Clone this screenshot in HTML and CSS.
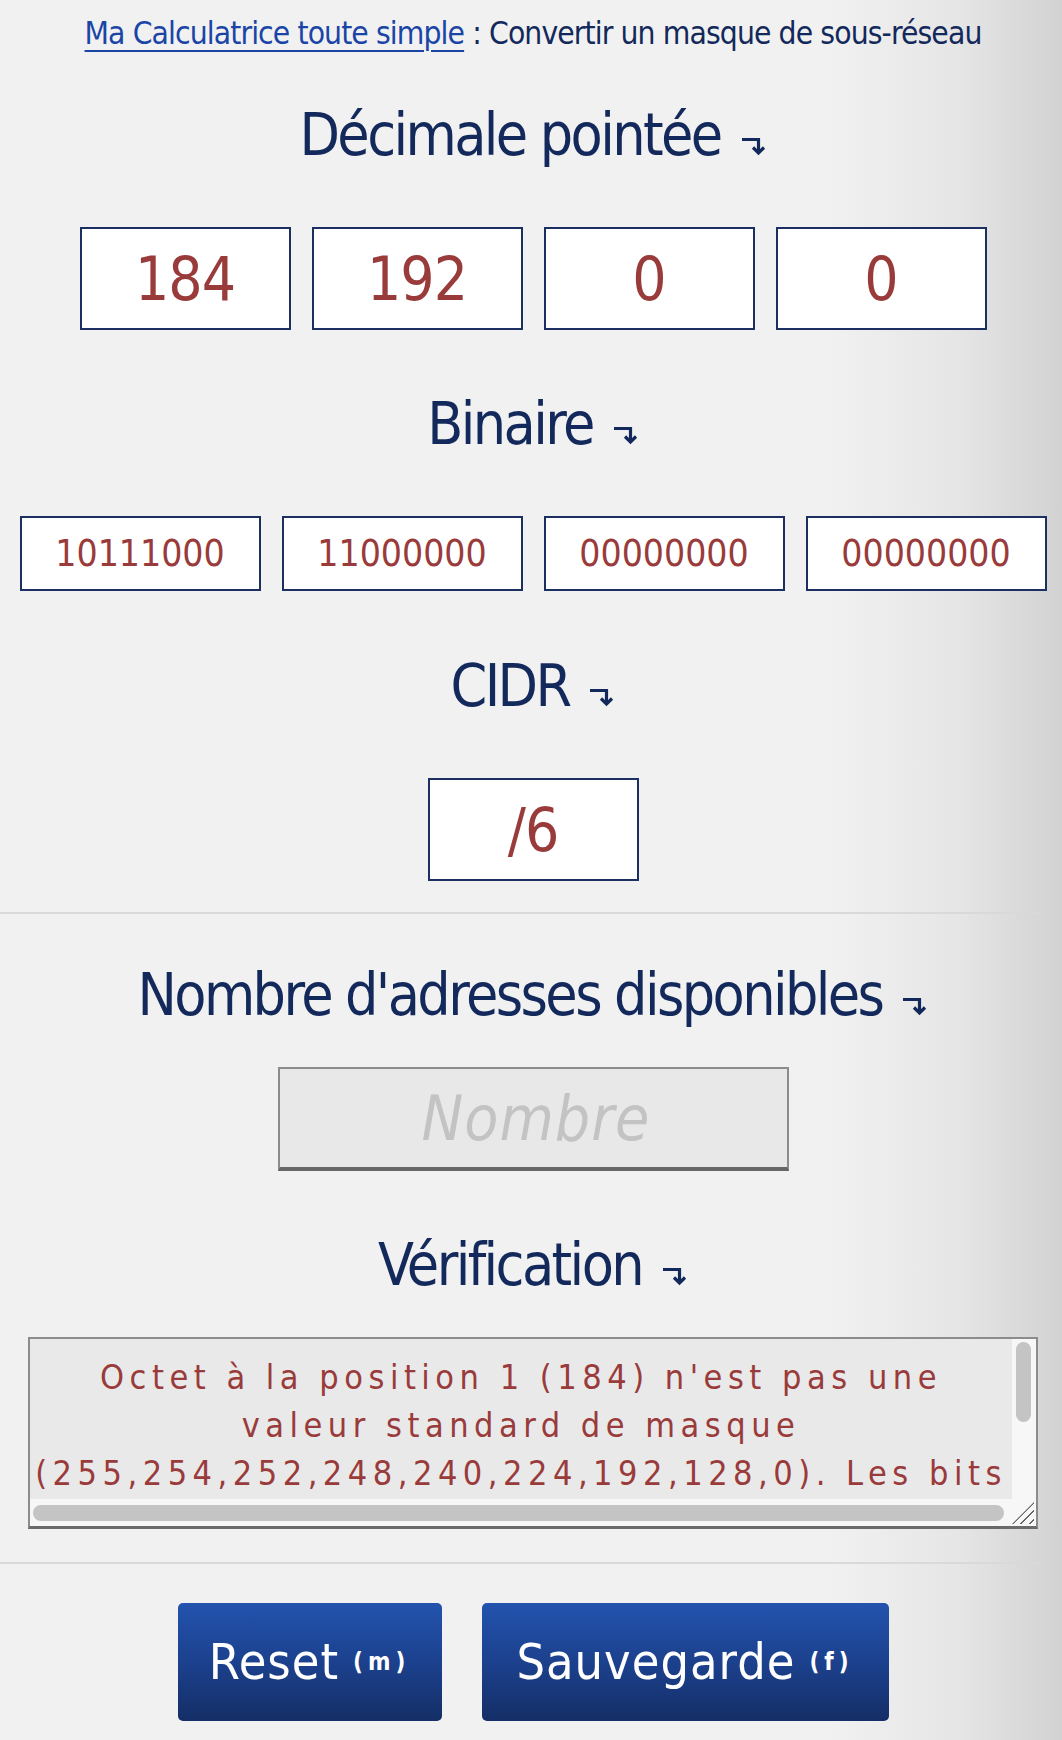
FILE: index.html
```html
<!DOCTYPE html>
<html lang="fr">
<head>
<meta charset="utf-8">
<title>Convertir un masque de sous-réseau</title>
<link rel="stylesheet" href="styles.css">
</head>
<body>
<main class="page">
  <p class="title"><a href="#" class="title-link">Ma Calculatrice toute simple</a> : Convertir un masque de sous-réseau</p>

  <h2 class="heading h-dec">Décimale pointée<svg class="arrow" viewBox="0 0 26 20" aria-hidden="true"><path d="M1 3.5H17.5V17"/><path d="M12 11.5L17.5 17L23 11.5"/></svg></h2>
  <div class="row row-dec">
    <div class="box box-dec">184</div>
    <div class="box box-dec">192</div>
    <div class="box box-dec">0</div>
    <div class="box box-dec">0</div>
  </div>

  <h2 class="heading h-bin">Binaire<svg class="arrow" viewBox="0 0 26 20" aria-hidden="true"><path d="M1 3.5H17.5V17"/><path d="M12 11.5L17.5 17L23 11.5"/></svg></h2>
  <div class="row row-bin">
    <div class="box box-bin">10111000</div>
    <div class="box box-bin">11000000</div>
    <div class="box box-bin">00000000</div>
    <div class="box box-bin">00000000</div>
  </div>

  <h2 class="heading h-cidr">CIDR<svg class="arrow" viewBox="0 0 26 20" aria-hidden="true"><path d="M1 3.5H17.5V17"/><path d="M12 11.5L17.5 17L23 11.5"/></svg></h2>
  <div class="row row-cidr">
    <div class="box box-dec">/6</div>
  </div>

  <hr class="sep sep-1">

  <h2 class="heading h-nb">Nombre d'adresses disponibles<svg class="arrow" viewBox="0 0 26 20" aria-hidden="true"><path d="M1 3.5H17.5V17"/><path d="M12 11.5L17.5 17L23 11.5"/></svg></h2>
  <div class="row row-nb">
    <div class="field"><span class="placeholder">Nombre</span></div>
  </div>

  <h2 class="heading h-verif">Vérification<svg class="arrow" viewBox="0 0 26 20" aria-hidden="true"><path d="M1 3.5H17.5V17"/><path d="M12 11.5L17.5 17L23 11.5"/></svg></h2>
  <div class="textarea">
    <div class="textarea-content">Octet à la position 1 (184) n'est pas une<br>valeur standard de masque<br>(255,254,252,248,240,224,192,128,0). Les bits</div>
    <div class="vscroll"><div class="vthumb"></div></div>
    <div class="hscroll"><div class="hthumb"></div></div>
    <div class="grip"></div>
  </div>

  <hr class="sep sep-2">

  <div class="buttons">
    <button class="btn btn-reset">Reset <span class="key">(m)</span></button>
    <button class="btn btn-save">Sauvegarde <span class="key">(f)</span></button>
  </div>
</main>
</body>
</html>
```

FILE: styles.css
```css
html, body {
  margin: 0;
  padding: 0;
}
body {
  width: 1062px;
  min-height: 1740px;
  background: linear-gradient(to right, #f1f1f1 0%, #f1f1f1 78%, #e6e6e6 90%, #d2d2d2 100%);
  font-family: "DejaVu Sans Condensed", "DejaVu Sans", sans-serif;
  font-stretch: condensed;
  color: #13295b;
}
.page {
  display: flex;
  flex-direction: column;
  align-items: center;
  padding-left: 4px;
}
.title {
  margin: 0;
  height: 66px;
  line-height: 66px;
  font-size: 31.5px;
  letter-spacing: -0.9px;
  color: #13295b;
  white-space: nowrap;
}
.title-link {
  color: #1a45a6;
  text-decoration: underline;
  text-decoration-thickness: 2px;
  text-underline-offset: 6px;
}
.heading {
  margin: 0;
  height: 70px;
  line-height: 70px;
  font-size: 58.5px;
  font-weight: normal;
  letter-spacing: -2.6px;
  color: #13295b;
  white-space: nowrap;
  display: flex;
  align-items: center;
}
.arrow {
  width: 26px;
  height: 20px;
  margin-left: 20px;
  margin-top: 22px;
  fill: none;
  stroke: #13295b;
  stroke-width: 3.2;
}
.h-dec { margin-top: 34px; }
.h-bin { margin-top: 59px; }
.h-cidr { margin-top: 60px; }
.h-nb { margin-top: 46px; }
.h-verif { margin-top: 59px; }

.row {
  display: flex;
  justify-content: center;
  gap: 21px;
}
.row-dec { margin-top: 57px; }
.row-bin { margin-top: 57px; }
.row-cidr { margin-top: 57px; }
.row-nb { margin-top: 37px; }

.box {
  box-sizing: border-box;
  background: #ffffff;
  border: 2px solid #1b3060;
  color: #9a3b3b;
  display: flex;
  align-items: center;
  justify-content: center;
}
.box-dec {
  width: 211px;
  height: 103px;
  font-size: 60px;
  letter-spacing: -1px;
}
.box-bin {
  width: 241px;
  height: 75px;
  font-size: 37px;
  letter-spacing: 0;
}

.sep {
  align-self: flex-start;
  width: 1040px;
  height: 2px;
  border: 0;
  margin: 0;
  margin-left: -4px;
  background: #d9d9d9;
}
.sep-1 { margin-top: 31px; }
.sep-2 { margin-top: 33px; }

.field {
  box-sizing: border-box;
  width: 511px;
  height: 104px;
  background: #e8e8e8;
  border: 2px solid #8c8c8c;
  border-bottom: 4px solid #666666;
  display: flex;
  align-items: center;
  justify-content: center;
}
.placeholder {
  font-size: 62px;
  font-style: italic;
  color: #c3c3c3;
  letter-spacing: 1px;
  padding-left: 6px;
}

.textarea {
  position: relative;
  box-sizing: border-box;
  margin-top: 37px;
  width: 1010px;
  height: 192px;
  background: #f7f7f7;
  border: 2px solid #8c8c8c;
  border-bottom: 3px solid #6a6a6a;
  overflow: hidden;
}
.textarea-content {
  box-sizing: border-box;
  width: 982px;
  height: 160px;
  background: #e9e9e9;
  padding: 14px 0 0;
  color: #9a3b3b;
  font-size: 34px;
  line-height: 48px;
  letter-spacing: 5.5px;
  text-align: center;
  white-space: nowrap;
  overflow: hidden;
}
.vscroll {
  position: absolute;
  top: 0;
  right: 0;
  width: 26px;
  height: 160px;
}
.vthumb {
  position: absolute;
  top: 3px;
  left: 6px;
  width: 15px;
  height: 80px;
  border-radius: 8px;
  background: #c4c4c4;
}
.hscroll {
  position: absolute;
  left: 0;
  bottom: 0;
  width: 982px;
  height: 27px;
}
.hthumb {
  position: absolute;
  left: 3px;
  right: 8px;
  top: 6px;
  height: 16px;
  border-radius: 8px;
  background: #c4c4c4;
}
.grip {
  position: absolute;
  right: 2px;
  bottom: 2px;
  width: 22px;
  height: 22px;
  background: repeating-linear-gradient(135deg, transparent 0 3px, #666 3px 4.5px, transparent 4.5px 6px);
  clip-path: polygon(100% 0, 100% 100%, 0 100%);
}

.buttons {
  display: flex;
  justify-content: center;
  gap: 40px;
  margin-top: 39px;
}
.btn {
  height: 118px;
  border: 0;
  border-radius: 5px;
  background: linear-gradient(to bottom, #2353ae 0%, #1b3f8a 55%, #142e66 100%);
  color: #ffffff;
  font-family: "DejaVu Sans Condensed", "DejaVu Sans", sans-serif;
  font-stretch: condensed;
  font-size: 50px;
  letter-spacing: 1px;
  padding: 0;
  display: flex;
  align-items: center;
  justify-content: center;
}
.btn-reset { width: 264px; }
.btn-save { width: 407px; }
.key {
  font-size: 24px;
  font-weight: bold;
  letter-spacing: 5px;
  margin-left: 14px;
}
```
